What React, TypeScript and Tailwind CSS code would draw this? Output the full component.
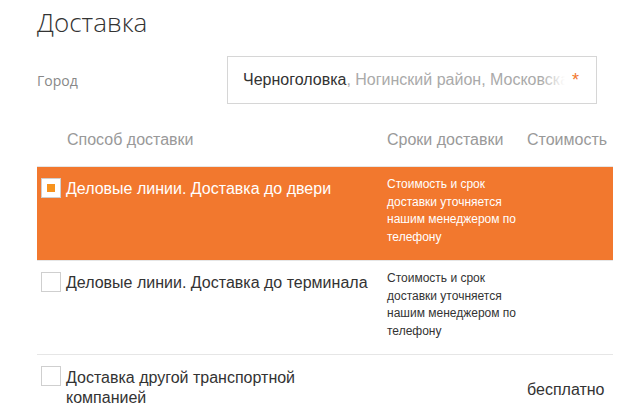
import React from "react";

const Checkbox = ({ checked }: { checked?: boolean }) => (
  <div className="w-5 h-5 shrink-0 border border-[#cfcfcf] bg-white flex items-center justify-center">
    {checked && <div className="w-2 h-2 bg-[#f7931e]" />}
  </div>
);

const Desc = ({ white }: { white?: boolean }) => (
  <div className={`text-[12px] leading-[17.5px] ${white ? "text-white" : "text-[#333]"}`}>
    Стоимость и срок
    <br />
    доставки уточняется
    <br />
    нашим менеджером по
    <br />
    телефону
  </div>
);

export default function App() {
  return (
    <div className="w-[639px] h-[416px] overflow-hidden bg-white" style={{ fontFamily: '"Liberation Sans", Arial, sans-serif' }}>
      <div className="pl-[37px] w-[613px]">
        <h1 className="pt-[5px] text-[26px] leading-[34px] font-light text-[#333]" style={{ fontFamily: '"Open Sans", sans-serif' }}>
          Доставка
        </h1>
        <div className="mt-[17px] flex items-center">
          <div className="w-[190px] text-[14px] text-[#888]" style={{ fontFamily: '"Open Sans", sans-serif' }}>
            Город
          </div>
          <div className="w-[370px] h-[48px] border border-[#d6d6d6] flex items-center pl-[15px] pr-[17px]">
            <div className="relative w-[322px] overflow-hidden whitespace-nowrap text-[16px]">
              <span className="text-[#333]">Черноголовка</span>
              <span className="text-[#aaa]">, Ногинский район, Московская область</span>
              <div className="absolute right-0 top-0 bottom-0 w-[24px] bg-gradient-to-r from-transparent to-white" />
            </div>
            <span className="ml-auto text-[#f2782e] text-[18px] leading-none">*</span>
          </div>
        </div>
        <div className="mt-[23px] flex text-[16px] text-[#999] h-[26px] items-center">
          <div className="w-[350px] pl-[30px]">Способ доставки</div>
          <div className="w-[140px]">Сроки доставки</div>
          <div className="flex-1">Стоимость</div>
        </div>
        <div className="mt-[13px] border-t border-[#e6e6e6]">
          <div className="flex bg-[#f2782e] h-[93px]">
            <div className="w-[350px] pl-1 pt-[11px] flex gap-[5px]">
              <Checkbox checked />
              <div className="pt-[1px] text-[16px] leading-5 text-white">Деловые линии. Доставка до двери</div>
            </div>
            <div className="w-[140px] pt-[9px]">
              <Desc white />
            </div>
            <div className="flex-1" />
          </div>
          <div className="flex border-t border-[#e6e6e6] h-[94px]">
            <div className="w-[350px] pl-1 pt-[11px] flex gap-[5px]">
              <Checkbox />
              <div className="pt-[1px] text-[16px] leading-5 text-[#333]">Деловые линии. Доставка до терминала</div>
            </div>
            <div className="w-[140px] pt-[9px]">
              <Desc />
            </div>
            <div className="flex-1" />
          </div>
          <div className="flex border-t border-[#e6e6e6] h-[70px]">
            <div className="w-[350px] pl-1 pt-[11px] flex gap-[5px]">
              <Checkbox />
              <div className="pt-[2px] text-[16px] leading-5 text-[#333] w-[260px]">Доставка другой транспортной компанией</div>
            </div>
            <div className="w-[140px]" />
            <div className="flex-1 self-center text-[16px] text-[#333]">бесплатно</div>
          </div>
        </div>
      </div>
    </div>
  );
}
